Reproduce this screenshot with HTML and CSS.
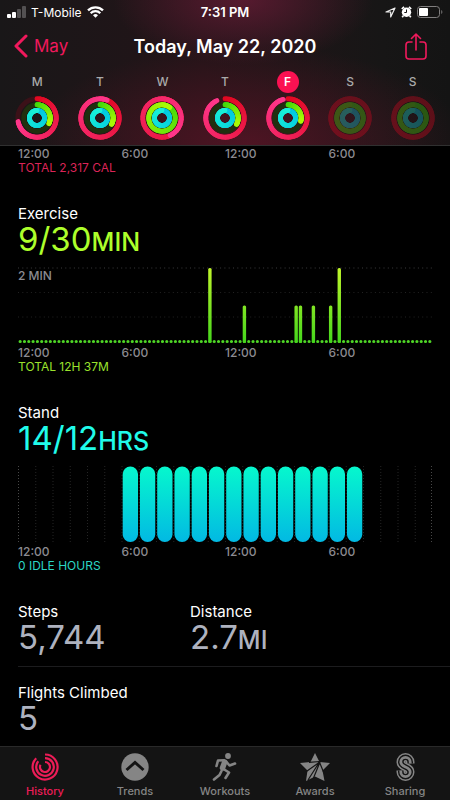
FILE: index.html
```html
<!DOCTYPE html>
<html lang="en">
<head>
<meta charset="utf-8">
<meta name="viewport" content="width=device-width, initial-scale=1">
<title>Activity</title>
<link rel="stylesheet" href="styles.css">
</head>
<body>
<header class="top">
  <div class="status">
    <div class="status-left">
      <svg width="19" height="12" viewBox="0 0 19 12" fill="#fff"><rect x="0" y="8" width="4" height="4" rx="1"/><rect x="5" y="6" width="4" height="6" rx="1"/><rect x="10" y="3" width="4" height="9" rx="1" opacity=".25"/><rect x="15" y="0" width="4" height="12" rx="1" opacity=".25"/></svg>
      <span>T-Mobile</span>
      <svg width="17" height="12" viewBox="0 0 17 12" fill="none" stroke="#fff" stroke-width="2.3"><path d="M1 4.4a10.6 10.6 0 0 1 15 0M3.7 7.2a6.8 6.8 0 0 1 9.6 0"/><path d="M8.500 11.800L6 9.300a3.500 3.500 0 0 1 5 0z" fill="#fff" stroke="none"/></svg>
    </div>
    <span class="clock">7:31 PM</span>
    <div class="status-right">
      <svg width="11" height="11" viewBox="0 0 11 11" fill="none" stroke="#eee" stroke-width="1.200" stroke-linejoin="round"><path d="M10 1L1 5h4.700V10z"/></svg>
      <svg width="11" height="12" viewBox="0 0 11 12"><circle cx="5.500" cy="6.300" r="4.700" fill="#fff"/><path d="M.8 3L3 .9M8 .9L10.200 3M2.300 9.800L1.200 11.300M8.700 9.800l1.100 1.500" stroke="#fff" stroke-width="1.700"/><path d="M5.500 3.500v3H3.300" fill="none" stroke="#161415"/></svg>
      <svg width="26" height="12" viewBox="0 0 26 12"><rect x=".5" y=".5" width="22" height="11" rx="3" fill="none" stroke="#807e7f"/><rect x="2" y="2" width="9" height="8" rx="1" fill="#fff"/><path d="M24.300 4v4c1.400-.6 1.400-3.400 0-4z" fill="#807e7f"/></svg>
    </div>
  </div>
  <nav class="titlebar">
    <a class="back" href="#may"><svg width="14" height="24" viewBox="0 0 14 24" fill="none" stroke="currentColor" stroke-width="3" stroke-linecap="round" stroke-linejoin="round"><path d="M12 2L2 12l10 10"/></svg>May</a>
    <h1>Today, May 22, 2020</h1>
    <button class="share" type="button" aria-label="Share"><svg width="22" height="27" viewBox="0 0 22 27" fill="none" stroke="currentColor" stroke-width="1.600" stroke-linecap="round" stroke-linejoin="round"><path d="M7 9H4a3 3 0 0 0-3 3v11a3 3 0 0 0 3 3h14a3 3 0 0 0 3-3V12a3 3 0 0 0-3-3h-3M11 17V1M6.500 5.500L11 1l4.500 4.500"/></svg></button>
  </nav>
  <ol class="week" id="week"></ol>
</header>

<main>
  <section class="metric">
    <div class="axis"><span>12:00</span><span>6:00</span><span>12:00</span><span>6:00</span></div>
    <p class="total move">TOTAL 2,317 CAL</p>
  </section>

  <section class="metric">
    <h2>Exercise</h2>
    <p class="value exercise">9/30<small>MIN</small></p>
    <div class="plot">
      <span class="scale">2 MIN</span>
      <svg class="chart" id="exercise" viewBox="0 0 414 78"></svg>
    </div>
    <div class="axis"><span>12:00</span><span>6:00</span><span>12:00</span><span>6:00</span></div>
    <p class="total exercise">TOTAL 12H 37M</p>
  </section>

  <section class="metric">
    <h2>Stand</h2>
    <p class="value stand">14/12<small>HRS</small></p>
    <div class="plot">
      <svg class="chart" id="stand" viewBox="0 0 414 78"></svg>
    </div>
    <div class="axis"><span>12:00</span><span>6:00</span><span>12:00</span><span>6:00</span></div>
    <p class="total idle">0 IDLE HOURS</p>
  </section>

  <div class="pair">
    <section><h2>Steps</h2><p class="value plain">5,744</p></section>
    <section><h2>Distance</h2><p class="value plain">2.7<small>MI</small></p></section>
  </div>
  <section class="flights"><h2>Flights Climbed</h2><p class="value plain">5</p></section>
</main>

<nav class="tabs">
  <a class="active" href="#history"><svg width="28" height="28" viewBox="0 0 28 28" fill="none" stroke="currentColor" stroke-width="2.200"><path d="M14 1.500A12.500 12.500 0 1 1 5.200 5.200"/><path d="M14 5.200A8.800 8.800 0 1 1 7.300 8.300"/><path d="M14 9A5 5 0 1 1 9.500 11.800"/></svg>History</a>
  <a href="#trends"><svg width="28" height="28" viewBox="0 0 28 28"><circle cx="14" cy="14" r="13.700" fill="currentColor"/><path d="M5.500 17L14 9.500l8.500 7.500" fill="none" stroke="#141414" stroke-width="3"/></svg>Trends</a>
  <a href="#workouts"><svg width="28" height="28" viewBox="0 0 28 28" fill="none" stroke="currentColor" stroke-width="2.600" stroke-linecap="round" stroke-linejoin="round"><circle cx="17" cy="3" r="2.900" fill="currentColor" stroke="none"/><path d="M5.500 13l1.500-5.500 6-.3M15.500 9l3 3.500 5.500-2M12.500 16l5.500 3.500-3.500 5.500M10.500 18l-2 4L3 26.500"/><path d="M13.700 9l-2.200 6" stroke-width="5.500"/></svg>Workouts</a>
  <a href="#awards"><svg width="30" height="28" viewBox="0 0 30 28"><path d="M15 0l4.500 9L30 10l-7.500 7.500 2 10.500L15 23.500 6 28l1.500-10.500L0 10l10.500-1z" fill="currentColor"/><path d="M20 8.500L9 9.300M20.500 8.500L6 18.800M20 9L13.500 25M19 8l4.500 11M19.500 9L8 27" fill="none" stroke="#141414" stroke-width="1.200"/></svg>Awards</a>
  <a href="#sharing"><svg width="19" height="28" viewBox="0 0 19 28" fill="none" stroke="currentColor"><path stroke-width="8.600" d="M14.200 10.500V9A4.700 4.700 0 0 0 4.800 9c0 6 9.400 4 9.400 10A4.700 4.700 0 0 1 4.800 19V17.500"/><path stroke="#141414" stroke-width="5.600" d="M14.200 10.500V9A4.700 4.700 0 0 0 4.800 9c0 6 9.400 4 9.400 10A4.700 4.700 0 0 1 4.800 19V17.500"/><path stroke-width="2.800" d="M14.200 10.500V9A4.700 4.700 0 0 0 4.800 9c0 6 9.400 4 9.400 10A4.700 4.700 0 0 1 4.800 19V17.500"/></svg>Sharing</a>
</nav>
<script src="app.js"></script>
</body>
</html>
```
FILE: styles.css
```css
* { box-sizing: border-box; margin: 0; padding: 0; }

body {
  min-height: 100vh;
  display: flex;
  flex-direction: column;
  background: #000;
  color: #fff;
  font-family: Inter, "Liberation Sans", sans-serif;
}

svg { display: block; }
a { color: inherit; text-decoration: none; }

.top {
  padding-bottom: 5px;
  border-bottom: 1px solid #303030;
  background:
    radial-gradient(130px 65px at 54% 0, rgba(105, 28, 55, .75), transparent),
    radial-gradient(220px 100px at 55% 100%, rgba(90, 20, 38, .8), transparent),
    linear-gradient(90deg, #191718, #231418 45%, #171616 85%, #141414);
}

.status {
  display: grid;
  grid-template-columns: 1fr auto 1fr;
  align-items: center;
  height: 24px;
  padding: 0 7px;
  font-size: 12px;
}
.status-left, .status-right { display: flex; align-items: center; gap: 5px; }
.status-right { justify-content: flex-end; }
.clock { font-size: 13px; font-weight: 600; }

.titlebar {
  display: grid;
  grid-template-columns: 1fr auto 1fr;
  align-items: center;
  height: 44px;
  padding: 0 14px;
  color: #f0195c;
}
.back { display: flex; align-items: center; gap: 6px; font-size: 17px; }
h1 { color: #fff; font-size: 18px; font-weight: 600; }
.share { justify-self: end; padding: 0 9px; border: 0; background: none; color: inherit; }

.week {
  display: grid;
  grid-template-columns: repeat(7, 1fr);
  padding: 3px 6px 0;
  list-style: none;
}
.week li { display: flex; flex-direction: column; align-items: center; gap: 3px; }
.day {
  width: 22px;
  height: 22px;
  border-radius: 50%;
  color: #aaa;
  font-size: 12px;
  font-weight: 500;
  line-height: 22px;
  text-align: center;
}
.today .day { background: #fb1152; color: #fff; font-weight: 600; }
.future svg { opacity: .34; }

main { flex: 1; padding-left: 18px; }

.metric { padding: 0 18px 31px 0; }
h2 { font-size: 15px; font-weight: 400; line-height: 18px; }
.value { font-size: 33px; line-height: 32px; }
.value small { font-size: 25px; font-weight: 500; line-height: 1; }
.exercise { color: #adff2b; }
.stand { color: #20fbea; }
.plain { color: #aeb2bf; }

.plot { position: relative; padding: 11px 0 1px; }
.chart { width: 100%; height: auto; }
.scale { position: absolute; top: 13px; left: 0; color: #8c8b91; font-size: 12px; font-weight: 500; line-height: 15px; }

.axis {
  display: grid;
  grid-template-columns: repeat(4, 1fr);
  color: #8c8b91;
  font-size: 12px;
  font-weight: 500;
  line-height: 15px;
}
.total { font-size: 12px; line-height: 13px; }
.move { color: #db2457; }
.total.exercise { color: #9be22c; }
.idle { color: #2bd6c5; }

.pair {
  display: grid;
  grid-template-columns: 172px 1fr;
  padding-bottom: 13px;
  border-bottom: 1px solid #1c1c1e;
}
.flights { padding: 17px 0 10px; }

.tabs {
  display: grid;
  grid-template-columns: repeat(5, 1fr);
  height: 54px;
  padding-top: 6px;
  border-top: 1px solid #292929;
  background: #141414;
  color: #858585;
  font-size: 11px;
  font-weight: 500;
  line-height: 16px;
}
.tabs a { display: flex; flex-direction: column; align-items: center; gap: 2px; }
.tabs .active { color: #ec1c57; }
```
FILE: app.js
```js
const days = [
  { name: "M", move: 0.72, exercise: 0.32 },
  { name: "T", move: 1.06, exercise: 0.33 },
  { name: "W", move: 1.43, exercise: 1.1 },
  { name: "T", move: 0.93, exercise: 0.33 },
  { name: "F", move: 0.96, exercise: 0.29, state: "today" },
  { name: "S", move: 1, exercise: 1, state: "future" },
  { name: "S", move: 1, exercise: 1, state: "future" }
];

function ring(radius, amount, from, to, track) {
  const steps = 60;
  const point = t => {
    const a = t * 2 * Math.PI;
    return (22 + radius * Math.sin(a)).toFixed(2) + " " + (22 - radius * Math.cos(a)).toFixed(2);
  };
  const mix = t => "rgb(" + from.map((c, i) => Math.round(c + (to[i] - c) * t)).join(",") + ")";
  let out = `<circle cx="22" cy="22" r="${radius}" fill="none" stroke="${track}"/>`;
  for (let i = 0; i < steps; i++) {
    const a = amount * i / steps;
    const b = amount * (i + 1) / steps;
    out += `<path d="M${point(a)}L${point(b)}" stroke="${mix(i / steps)}"/>`;
  }
  return out;
}

document.getElementById("week").innerHTML = days.map(d => {
  const future = d.state === "future";
  return `
  <li class="${d.state || ""}">
    <span class="day">${d.name}</span>
    <svg width="44" height="44" viewBox="0 0 44 44" stroke-width="4.900" stroke-linecap="round">
      ${ring(19.2, d.move, [224, 8, 32], future ? [224, 8, 32] : [255, 55, 140], "#3b1118")}
      ${ring(13.2, d.exercise, [62, 215, 12], future ? [90, 215, 12] : [172, 250, 5], "#20300f")}
      ${ring(7.500, 1, [0, 195, 225], [25, 240, 215], "#083038")}
    </svg>
  </li>`;
}).join("");

const slot = 414 / 96;
const activity = [[44, 2], [52, 1], [64, 1], [65, 1], [68, 1], [72, 1], [74, 2]];
document.getElementById("exercise").innerHTML =
  `<defs><linearGradient id="g" gradientUnits="userSpaceOnUse" x1="0" y1="2" x2="0" y2="77"><stop stop-color="#c0f52b"/><stop offset="1" stop-color="#43d61c"/></linearGradient></defs>` +
  [2, 26.5, 51].map((y, i) => `<path d="M0 ${y}H414" stroke="${i ? "#222" : "#3a3a3c"}" stroke-dasharray="1 3.300"/>`).join("") +
  `<path d="M${slot / 2} 75.500H413" stroke="#4fd626" stroke-width="3.200" stroke-linecap="round" stroke-dasharray="0 ${slot}"/>` +
  activity.map(([i, n]) => `<rect x="${(i + 0.5) * slot - 1.700}" y="${77 - n * 37.5}" width="3.400" height="${n * 37.5}" rx="1.500" fill="url(#g)"/>`).join("");

const hour = 414 / 24;
let stand = `<defs><linearGradient id="s" x2="0" y2="1"><stop stop-color="#06f8cd"/><stop offset="1" stop-color="#02b9e3"/></linearGradient></defs>`;
for (let h = 0; h <= 24; h++) {
  stand += `<path d="M${Math.min(h * hour + 0.5, 413.5)} 1V77" stroke="${h % 24 ? "#242424" : "#484848"}" stroke-dasharray="1 2"/>`;
}
for (let h = 6; h < 20; h++) {
  stand += `<rect x="${h * hour + 1.200}" y="1.500" width="15.300" height="75.500" rx="7.600" fill="url(#s)"/>`;
}
document.getElementById("stand").innerHTML = stand;
```
